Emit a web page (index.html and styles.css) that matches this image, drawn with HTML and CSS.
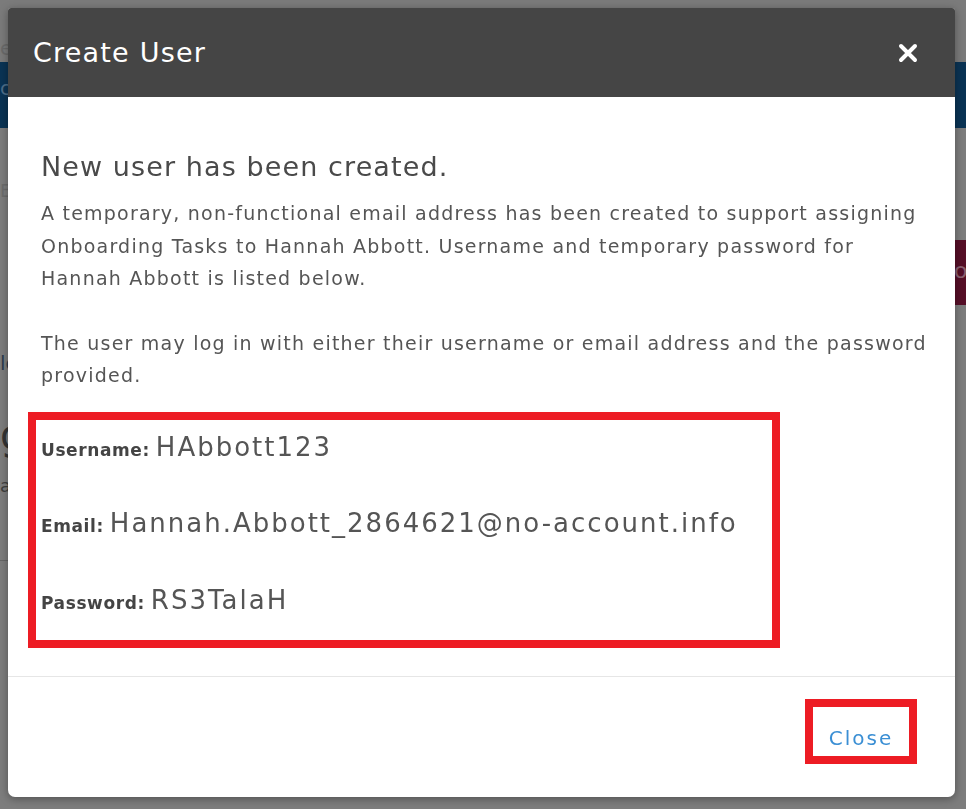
FILE: index.html
```html
<!DOCTYPE html>
<html lang="en">
<head>
<meta charset="utf-8">
<title>Create User</title>
<link rel="stylesheet" href="styles.css">
</head>
<body>
<div class="page">
  <div class="topbar"><span class="faint">e</span></div>
  <div class="nav"><span class="navtext">co</span></div>
  <div class="content">
    <div class="left-col">
      <div class="crumb">Ed</div>
      <div class="lbl">lo</div>
      <div class="big">g</div>
      <div class="small">ai</div>
      <div class="rule"></div>
    </div>
    <div class="right-col">
      <div class="crimson">o</div>
    </div>
  </div>
</div>

<div class="modal" role="dialog" aria-labelledby="modal-title">
  <div class="modal-header">
    <h1 id="modal-title" class="modal-title">Create User</h1>
    <button class="icon-close" aria-label="Close">
      <svg width="20" height="20" viewBox="0 0 20 20"><path d="M3 3 L17 17 M17 3 L3 17" stroke="#fff" stroke-width="4" stroke-linecap="round"/></svg>
    </button>
  </div>
  <div class="modal-body">
    <h2 class="success">New user has been created.</h2>
    <p class="info">A temporary, non-functional email address has been created to support assigning<br>Onboarding Tasks to Hannah Abbott. Username and temporary password for<br>Hannah Abbott is listed below.</p>
    <p class="info">The user may log in with either their username or email address and the password<br>provided.</p>
    <div class="creds">
      <div class="cred"><span class="cred-label">Username:</span> <span class="cred-value">HAbbott123</span></div>
      <div class="cred"><span class="cred-label">Email:</span> <span class="cred-value">Hannah.Abbott_2864621@no-account.info</span></div>
      <div class="cred"><span class="cred-label">Password:</span> <span class="cred-value">RS3TalaH</span></div>
    </div>
  </div>
  <div class="modal-footer">
    <button class="btn-close">Close</button>
  </div>
</div>
</body>
</html>
```
FILE: styles.css
```css
* { box-sizing: border-box; }
html, body { margin: 0; padding: 0; }
body {
  width: 966px;
  height: 809px;
  overflow: hidden;
  background: #7d7d7d;
  font-family: "DejaVu Sans", "Open Sans", sans-serif;
}
.page { display: flex; flex-direction: column; height: 809px; }
.topbar {
  height: 62px;
  background: #7b7b7b;
  padding: 38px 0 0 0;
  color: #6a6a6a;
  font-size: 20px;
  line-height: 20px;
  white-space: nowrap;
}
.nav {
  height: 66px;
  background: #0a3354;
  color: #4d6d88;
  font-size: 20px;
  padding-top: 14px;
  white-space: nowrap;
}
.content { flex: 1; display: flex; justify-content: space-between; }
.left-col {
  width: 40px;
  display: flex;
  flex-direction: column;
  overflow: hidden;
  color: #3f3f3f;
  white-space: nowrap;
}
.crumb { margin-top: 52px; font-size: 18px; color: #6c6c6c; }
.lbl { margin-top: 150px; font-size: 20px; color: #2e3d4e; }
.big { margin-top: 40px; font-size: 40px; line-height: 40px; color: #333; }
.small { margin-top: 20px; font-size: 18px; }
.rule { margin-top: 64px; height: 1px; background: #666; width: 40px; }
.right-col { width: 40px; }
.crimson {
  margin-top: 112px;
  height: 65px;
  background: #560f27;
  color: #8a6070;
  font-size: 22px;
  padding: 18px 0 0 28px;
  overflow: hidden;
}

.modal {
  position: fixed;
  left: 8px;
  top: 8px;
  width: 947px;
  height: 789px;
  background: #fff;
  border-radius: 3px 3px 7px 7px;
  overflow: hidden;
  display: flex;
  flex-direction: column;
  box-shadow: 0 2px 8px rgba(0,0,0,0.35);
}
.modal-header {
  height: 89px;
  flex: none;
  background: #454545;
  display: flex;
  align-items: center;
  justify-content: space-between;
  padding: 0 37px 0 25px;
}
.modal-title {
  margin: 0;
  color: #fff;
  font-size: 27px;
  font-weight: 400;
  letter-spacing: 1.2px;
}
.icon-close {
  background: none;
  border: 0;
  padding: 0;
  width: 20px;
  height: 20px;
  display: flex;
}
.modal-body {
  flex: 1;
  padding: 52px 0 0 33px;
}
.success {
  margin: 0 0 12px 0;
  font-size: 27px;
  font-weight: 400;
  color: #4a4a4a;
  line-height: 36px;
  letter-spacing: 1.1px;
}
.info {
  margin: 0 0 32px 0;
  font-size: 19px;
  line-height: 32.5px;
  color: #555;
  letter-spacing: 1.22px;
}
.creds {
  margin: -12px 0 0 -13px;
  width: 752px;
  height: 236px;
  border: 8px solid #ed1c24;
  padding: 12px 0 0 5px;
}
.cred { height: 76.5px; display: flex; align-items: baseline; gap: 6px; }
.cred-label { font-size: 17px; font-weight: 700; color: #444; letter-spacing: 0.6px; }
.cred-value { font-size: 26px; color: #555; letter-spacing: 2px; }
.modal-footer {
  height: 121px;
  flex: none;
  border-top: 1px solid #e6e6e6;
  display: flex;
  justify-content: flex-end;
  align-items: flex-start;
  padding: 22px 38px 0 0;
}
.btn-close {
  width: 112px;
  height: 65px;
  border: 8px solid #ed1c24;
  background: #fff;
  color: #3b8fd4;
  font-family: inherit;
  font-size: 20px;
  letter-spacing: 2px;
  padding: 12px 0 0 0;
}
```
